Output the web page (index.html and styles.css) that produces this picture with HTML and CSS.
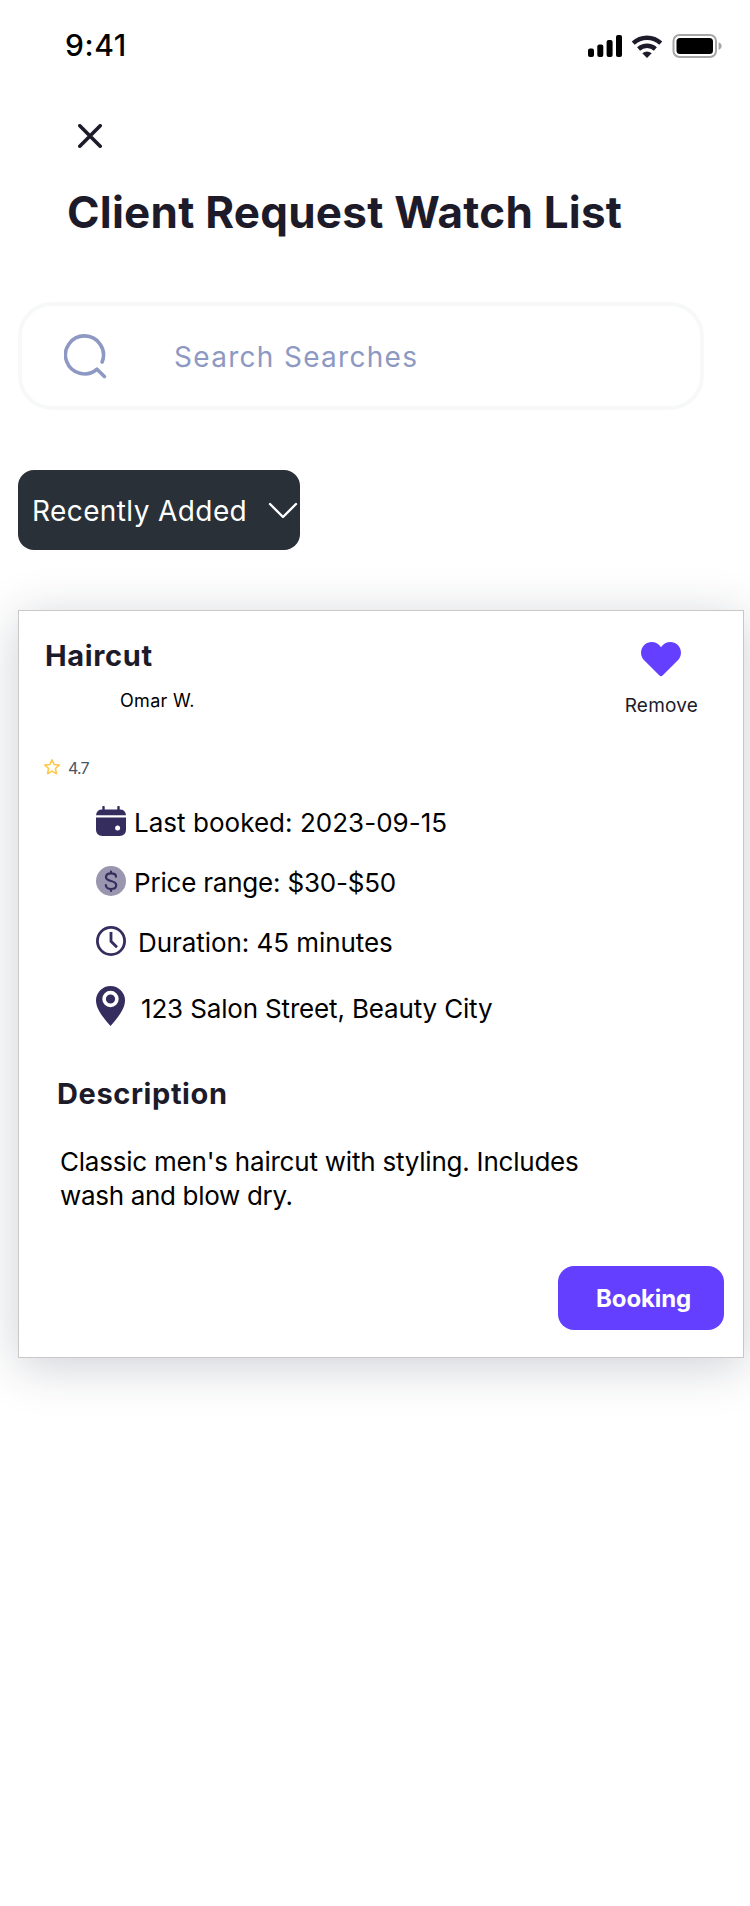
FILE: index.html
```html
<!DOCTYPE html>
<html lang="en">
<head>
<meta charset="utf-8">
<title>Client Request Watch List</title>
<link rel="stylesheet" href="styles.css">
</head>
<body>
<main class="screen">
  <header class="status">
    <span class="time">9:41</span>
    <div class="indicators">
      <svg class="signal" width="34" height="22" viewBox="0 0 34 22"><rect x="0" y="13.5" width="6" height="8.5" rx="2"/><rect x="9.3" y="9.5" width="6" height="12.5" rx="2"/><rect x="18.6" y="5" width="6" height="17" rx="2"/><rect x="28" y="0" width="6" height="22" rx="2"/></svg>
      <svg class="wifi" width="32" height="23" viewBox="0 0 32 23"><path d="M2.2 8.2a20.3 20.3 0 0 1 27.6 0M7.6 14a12.6 12.6 0 0 1 16.8 0" fill="none" stroke="#1d1b2a" stroke-width="4.4"/><path d="M11.3 18.3a7.6 7.6 0 0 1 9.4 0L16 23z" fill="#1d1b2a"/></svg>
      <svg class="battery" width="50" height="24" viewBox="0 0 50 24"><rect x="1.500" y="1" width="42.5" height="22" rx="6" fill="none" stroke="#a6a6a6" stroke-width="2"/><rect x="4.500" y="4" width="36.500" height="16" rx="3.5"/><path d="M46.6 8.2c2 .7 3 2.200 3 3.800s-1 3.100-3 3.800z" fill="#a6a6a6"/></svg>
    </div>
  </header>

  <button class="close" aria-label="Close"><svg width="24" height="24" viewBox="0 0 24 24"><path d="M1.800 1.800l20.400 20.400M22.200 1.800L1.800 22.200" stroke="#1d1b2a" stroke-width="3.600" stroke-linecap="round"/></svg></button>
  <h1 class="title">Client Request Watch List</h1>

  <div class="search">
    <svg width="44" height="46" viewBox="0 0 44 46"><path d="M38.100 29A19 19 0 1 0 33 36.200L40.400 43.500" fill="none" stroke="#8d99c2" stroke-width="3.600" stroke-linecap="round" stroke-linejoin="round"/></svg>
    <span class="placeholder">Search Searches</span>
  </div>

  <button class="sort">
    <span>Recently Added</span>
    <svg width="30" height="17" viewBox="0 0 30 17"><path d="M2 2l13 13L28 2" fill="none" stroke="#fff" stroke-width="2.400" stroke-linecap="round" stroke-linejoin="round"/></svg>
  </button>

  <article class="card">
    <div class="card-head">
      <div>
        <h2 class="service">Haircut</h2>
        <p class="client">Omar W.</p>
      </div>
      <div class="remove">
        <svg width="40" height="35" viewBox="0 0 40 35"><path d="M20 5.200C16.200-.7 8.200-1.600 3.500 2.800-1 7.100-1 13.800 2.900 18L18.200 33.300q1.800 1.700 3.600 0L37.100 18C41 13.800 41 7.100 36.500 2.800 31.800-1.600 23.800-.7 20 5.200z" fill="#643fff"/></svg>
        <span>Remove</span>
      </div>
    </div>

    <div class="rating">
      <svg width="16" height="17" viewBox="0 0 16 17"><path d="M8 .9l2.100 4.600 5.100.6-3.800 3.400 1.100 5.200L8 12.100l-4.500 2.600 1.100-5.200L.8 6.100l5.100-.6z" fill="none" stroke="#ffc84a" stroke-width="1.600" stroke-linejoin="round"/></svg>
      <span>4.7</span>
    </div>

    <ul class="facts">
      <li class="fact booked">
        <svg width="30" height="30" viewBox="0 0 30 30"><path d="M7.500 1v5M22.500 1v5" stroke="#362d5f" stroke-width="2.400" stroke-linecap="round"/><path d="M0 9.200Q.6 3.500 6 3.500H24Q29.400 3.500 30 9.200z" fill="#362d5f"/><path d="M0 11.500H30V23.500Q30 30 23.500 30H6.500Q0 30 0 23.500z" fill="#362d5f"/><circle cx="21.600" cy="22" r="2.500" fill="#fff"/></svg>
        <span>Last booked: 2023-09-15</span>
      </li>
      <li class="fact price">
        <svg width="30" height="30" viewBox="0 0 30 30"><circle cx="15" cy="15" r="15" fill="#9b96af"/><path d="M20 10.700C20 8.500 17.900 7.400 15 7.400S10 8.500 10 11s2.200 3.300 5 4 5.200 1.500 5.200 4.200-2.300 3.800-5.200 3.800-5.200-1.500-5.200-4M15 5.500v1.900M15 23v2" fill="none" stroke="#362d5f" stroke-width="2.200" stroke-linecap="round"/></svg>
        <span>Price range: $30-$50</span>
      </li>
      <li class="fact duration">
        <svg width="30" height="30" viewBox="0 0 30 30"><circle cx="15" cy="15" r="13.600" fill="none" stroke="#362d5f" stroke-width="2.800"/><path d="M15 6v9.300l6 6" fill="none" stroke="#362d5f" stroke-width="2.800"/></svg>
        <span>Duration: 45 minutes</span>
      </li>
      <li class="fact address">
        <svg width="29" height="40" viewBox="0 0 29 40"><path d="M14.500 0A14.500 14.500 0 0 0 0 14.500C0 22.500 6.500 31 14.500 40 22.500 31 29 22.500 29 14.500A14.500 14.500 0 0 0 14.500 0z" fill="#362d5f"/><circle cx="14.500" cy="13" r="6.400" fill="none" stroke="#fff" stroke-width="3.600"/></svg>
        <span>123 Salon Street, Beauty City</span>
      </li>
    </ul>

    <h2 class="desc-title">Description</h2>
    <p class="desc"><span class="line-a">Classic men's haircut with styling. Includes</span><br><span class="line-b">wash and blow dry.</span></p>
    <button class="booking">Booking</button>
  </article>
</main>
</body>
</html>
```
FILE: styles.css
```css
* { box-sizing: border-box; margin: 0; padding: 0; }
body { background: #fff; }
svg { display: block; flex: none; }
button { border: 0; background: none; font: inherit; cursor: pointer; display: flex; align-items: center; }

.screen {
  width: 750px;
  height: 1906px;
  overflow: hidden;
  display: flex;
  flex-direction: column;
  align-items: flex-start;
  font-family: Inter, "Liberation Sans", sans-serif;
  color: #000;
  white-space: nowrap;
}

.status { width: 100%; height: 124px; padding: 27px 28px 0 65px; display: flex; justify-content: space-between; align-items: flex-start; }
.time { font-size: 30px; line-height: 36px; font-weight: 500; letter-spacing: 0.6px; }
.indicators { display: flex; align-items: center; padding-top: 7px; }
.wifi { margin: 0 9px; }

.close { margin-left: 78px; height: 24px; }
.title { margin: 36px 0 0 67px; font-size: 44px; line-height: 56px; font-weight: 700; letter-spacing: 0.24px; color: #1d1b2a; }

.search {
  width: 686px;
  height: 108px;
  margin: 62px 0 0 18px;
  padding-left: 42px;
  border: 4px solid #f7f9f9;
  border-radius: 34px;
  display: flex;
  align-items: center;
  gap: 66px;
}
.placeholder { font-size: 28px; letter-spacing: 1.3px; color: #8d99c2; padding-top: 1px; }

.sort {
  width: 282px;
  height: 80px;
  margin: 60px 0 0 18px;
  padding: 0 2px 0 14px;
  border-radius: 16px;
  background: #293038;
  color: #fff;
  justify-content: space-between;
  font-size: 28px;
  letter-spacing: 0.4px;
}
.sort span { padding-top: 2px; }

.card {
  width: 726px;
  height: 748px;
  margin: 60px 0 0 18px;
  padding-top: 27px;
  border: 1px solid #c8c8c8;
  background: #fff;
  box-shadow: 0 8px 46px rgba(32, 42, 62, 0.22);
  display: flex;
  flex-direction: column;
  align-items: flex-start;
}
.card-head { width: 100%; height: 118px; padding: 0 45px 0 26px; display: flex; justify-content: space-between; }
.service { font-size: 29px; line-height: 36px; font-weight: 700; letter-spacing: 0.65px; color: #1d1b2a; }
.client { margin: 15px 0 0 75px; font-size: 18px; line-height: 24px; letter-spacing: 0.3px; }
.remove { display: flex; flex-direction: column; align-items: center; gap: 16px; padding-top: 4px; font-size: 19px; line-height: 26px; letter-spacing: 0.2px; color: #1d1b2a; }

.rating { display: flex; align-items: center; gap: 8px; height: 22px; margin-left: 25px; font-size: 16px; letter-spacing: -0.9px; color: #475467; }
.rating span { padding-top: 2px; }

.facts { list-style: none; margin: 13px 0 0 77px; }
.fact { display: flex; align-items: center; height: 60px; font-size: 26px; }
.fact span { padding-top: 3px; }
.booked { gap: 8px; letter-spacing: 0.03px; }
.price { gap: 8px; letter-spacing: -0.2px; }
.duration { gap: 12px; letter-spacing: -0.06px; }
.address { gap: 16px; height: 70px; letter-spacing: -0.16px; }
.address span { padding-top: 5px; }

.desc-title { margin: 35px 0 0 38px; font-size: 29px; line-height: 36px; font-weight: 700; letter-spacing: 0.6px; color: #1d1b2a; }
.desc { margin: 33px 0 0 41px; font-size: 26px; line-height: 34px; }
.line-a { letter-spacing: -0.22px; }
.line-b { letter-spacing: -0.32px; }

.booking {
  width: 166px;
  height: 64px;
  margin: 53px 19px 0 auto;
  padding-left: 38px;
  border-radius: 16px;
  background: #643fff;
  color: #fff;
  font-size: 24px;
  font-weight: 700;
  letter-spacing: -0.1px;
}
```
